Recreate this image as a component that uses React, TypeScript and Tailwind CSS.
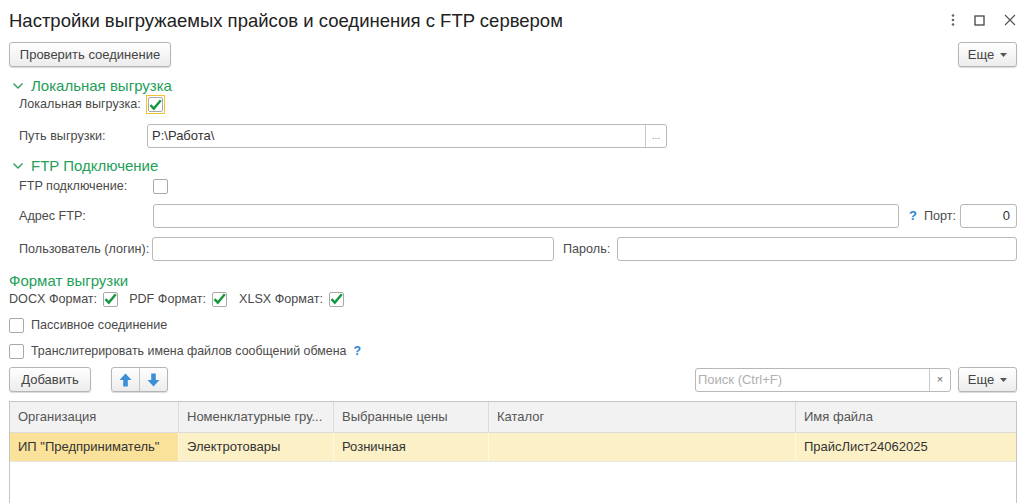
import React from 'react';

const FONT = { fontFamily: '"Liberation Sans", Arial, sans-serif' };

function Check({ checked, focused }: { checked?: boolean; focused?: boolean }) {
  const box = (
    <span className="flex h-[15px] w-[15px] shrink-0 items-center justify-center rounded-[2px] border border-[#a9a9a9] bg-white">
      {checked && (
        <svg width="13" height="12" viewBox="0 0 13 12">
          <path d="M1.5 6.2 L4.8 9.6 L11.8 1.2" fill="none" stroke="#17973f" strokeWidth="2.4" />
        </svg>
      )}
    </span>
  );
  if (focused) {
    return (
      <span className="flex h-[19px] w-[19px] items-center justify-center border border-[#f2c230]">{box}</span>
    );
  }
  return box;
}

function Chevron() {
  return (
    <svg width="12" height="8" viewBox="0 0 12 8" className="mr-[7px]">
      <path d="M1.5 1.5 L6 6 L10.5 1.5" fill="none" stroke="#2e9e5b" strokeWidth="1.4" />
    </svg>
  );
}

function GroupTitle({ text, chevron = true }: { text: string; chevron?: boolean }) {
  return (
    <div className="flex h-[18px] items-center text-[15px] text-[#23a058]">
      {chevron && <Chevron />}
      {text}
    </div>
  );
}

function Input({ className = '', value = '', align = 'left' }: { className?: string; value?: string; align?: string }) {
  return (
    <div
      className={`flex h-[24px] items-center rounded-[3px] border border-[#b8b8b8] bg-white px-[6px] text-[13px] text-[#333] ${
        align === 'right' ? 'justify-end' : ''
      } ${className}`}
    >
      {value}
    </div>
  );
}

function Button({ children, className = '' }: { children: React.ReactNode; className?: string }) {
  return (
    <div
      className={`flex h-[25px] items-center justify-center rounded-[3px] border border-[#b5b5b5] bg-gradient-to-b from-white to-[#ececec] text-[13px] text-[#444] shadow-[0_1px_1px_rgba(0,0,0,0.15)] ${className}`}
    >
      {children}
    </div>
  );
}

function MoreButton() {
  return (
    <Button className="w-[59px] gap-[6px]">
      <span>Еще</span>
      <svg width="7" height="4" viewBox="0 0 7 4">
        <path d="M0 0 H7 L3.5 4 Z" fill="#555" />
      </svg>
    </Button>
  );
}

function Arrow({ down }: { down?: boolean }) {
  return (
    <svg width="13" height="14" viewBox="0 0 13 14" style={{ transform: down ? 'rotate(180deg)' : undefined }}>
      <path d="M6.5 0.5 L12.5 7 H8.8 V13.5 H4.2 V7 H0.5 Z" fill="#3b8fd8" />
    </svg>
  );
}

const columns = [
  { title: 'Организация', w: 'w-[169px]' },
  { title: 'Номенклатурные гру...', w: 'w-[155px]' },
  { title: 'Выбранные цены', w: 'w-[155px]' },
  { title: 'Каталог', w: 'w-[307px]' },
  { title: 'Имя файла', w: 'flex-1' },
];

const row = ['ИП "Предприниматель"', 'Электротовары', 'Розничная', '', 'ПрайсЛист24062025'];

export default function App() {
  return (
    <div className="h-[503px] w-[1024px] overflow-hidden bg-white pl-[9px] pr-[7px] text-[#4a4a4a]" style={FONT}>
      {/* title bar */}
      <div className="flex h-[40px] items-center">
        <h1 className="flex-1 pt-[1px] text-[18.5px] text-[#222]">Настройки выгружаемых прайсов и соединения с FTP сервером</h1>
        <div className="flex items-center gap-[19px] pr-[1px] text-[#555]">
          <svg width="4" height="12" viewBox="0 0 4 12">
            <circle cx="2" cy="1.5" r="1.3" fill="#666" />
            <circle cx="2" cy="6" r="1.3" fill="#666" />
            <circle cx="2" cy="10.5" r="1.3" fill="#666" />
          </svg>
          <svg width="11" height="11" viewBox="0 0 11 11">
            <rect x="1" y="1" width="9" height="9" fill="none" stroke="#444" strokeWidth="1.3" />
          </svg>
          <svg width="12" height="12" viewBox="0 0 12 12">
            <path d="M1 1 L11 11 M11 1 L1 11" stroke="#555" strokeWidth="1.2" />
          </svg>
        </div>
      </div>

      {/* toolbar */}
      <div className="mt-[2px] flex items-center justify-between">
        <Button className="w-[162px]">Проверить соединение</Button>
        <MoreButton />
      </div>

      {/* local */}
      <div className="mt-[10px] pl-[3px]">
        <GroupTitle text="Локальная выгрузка" />
      </div>
      <div className="flex h-[19px] items-center pl-[10px] text-[12.6px]">
        <span className="w-[127px] whitespace-nowrap">Локальная выгрузка:</span>
        <Check checked focused />
      </div>
      <div className="mt-[10px] flex items-center pl-[10px] text-[12.6px]">
        <span className="w-[128px]">Путь выгрузки:</span>
        <div className="flex h-[24px] w-[520px] rounded-[3px] border border-[#b8b8b8]">
          <div className="flex flex-1 items-center px-[4px] text-[13px] text-[#333]">P:\Работа\</div>
          <div className="flex w-[21px] items-center justify-center border-l border-[#c8c8c8] text-[10px] leading-none text-[#888]">
            ...
          </div>
        </div>
      </div>

      {/* FTP */}
      <div className="mt-[9px] pl-[3px]">
        <GroupTitle text="FTP Подключение" />
      </div>
      <div className="mt-[3px] flex h-[16px] items-center pl-[10px] text-[12.6px]">
        <span className="w-[134px]">FTP подключение:</span>
        <Check />
      </div>
      <div className="mt-[10px] flex items-center pl-[10px] text-[12.6px]">
        <span className="w-[134px]">Адрес FTP:</span>
        <Input className="w-[746px]" />
        <span className="ml-[10px] text-[13px] font-bold text-[#2c86d0]">?</span>
        <span className="ml-[7px] w-[36px]">Порт:</span>
        <Input className="flex-1" value="0" align="right" />
      </div>
      <div className="mt-[9px] flex items-center pl-[10px] text-[12.6px]">
        <span className="w-[133px] whitespace-nowrap">Пользователь (логин):</span>
        <Input className="w-[402px]" />
        <span className="ml-[9px] w-[54px]">Пароль:</span>
        <Input className="flex-1" />
      </div>

      {/* format */}
      <div className="mt-[11px]">
        <GroupTitle text="Формат выгрузки" chevron={false} />
      </div>
      <div className="flex h-[18px] items-center text-[12.6px]">
        <span className="mr-[6px]">DOCX Формат:</span>
        <Check checked />
        <span className="ml-[11px] mr-[6px]">PDF Формат:</span>
        <Check checked />
        <span className="ml-[12px] mr-[6px]">XLSX Формат:</span>
        <Check checked />
      </div>
      <div className="mt-[8px] flex h-[18px] items-center gap-[7px] text-[12.6px]">
        <Check />
        <span>Пассивное соединение</span>
      </div>
      <div className="mt-[8px] flex h-[18px] items-center gap-[7px] text-[12.4px]">
        <Check />
        <span>Транслитерировать имена файлов сообщений обмена</span>
        <span className="font-bold text-[#2c86d0]">?</span>
      </div>

      {/* table toolbar */}
      <div className="mt-[7px] flex items-center">
        <Button className="w-[82px]">Добавить</Button>
        <div className="ml-[20px] flex h-[25px] w-[57px] overflow-hidden rounded-[3px] border border-[#b5b5b5] bg-gradient-to-b from-white to-[#ececec] shadow-[0_1px_1px_rgba(0,0,0,0.15)]">
          <div className="flex flex-1 items-center justify-center border-r border-[#c4c4c4]">
            <Arrow />
          </div>
          <div className="flex flex-1 items-center justify-center">
            <Arrow down />
          </div>
        </div>
        <div className="ml-auto flex h-[24px] w-[256px] rounded-[3px] border border-[#b8b8b8]">
          <div className="flex flex-1 items-center px-[2px] text-[13px] text-[#b0b0b0]">Поиск (Ctrl+F)</div>
          <div className="flex w-[21px] items-center justify-center border-l border-[#c8c8c8] text-[11px] text-[#666]">×</div>
        </div>
        <div className="ml-[7px]">
          <MoreButton />
        </div>
      </div>

      {/* table */}
      <div className="mt-[9px] h-[110px] border border-[#c4c4c4] text-[13px]">
        <div className="flex h-[31px] border-b border-[#dcdcdc] bg-[#f2f2f2] text-[#555]">
          {columns.map((c, i) => (
            <div
              key={c.title}
              className={`flex items-center px-[8px] ${c.w} ${i < columns.length - 1 ? 'border-r border-[#dcdcdc]' : ''}`}
            >
              {c.title}
            </div>
          ))}
        </div>
        <div className="flex h-[29px] border-b border-[#e6e6e6] bg-[#fcf0c7] text-[#333]">
          {row.map((v, i) => (
            <div
              key={i}
              className={`flex items-center px-[8px] ${columns[i].w} ${i === 0 ? 'bg-[#fbe29a]' : ''} ${
                i < row.length - 1 ? 'border-r border-[#fff8e0]' : ''
              }`}
            >
              {v}
            </div>
          ))}
        </div>
      </div>
    </div>
  );
}
